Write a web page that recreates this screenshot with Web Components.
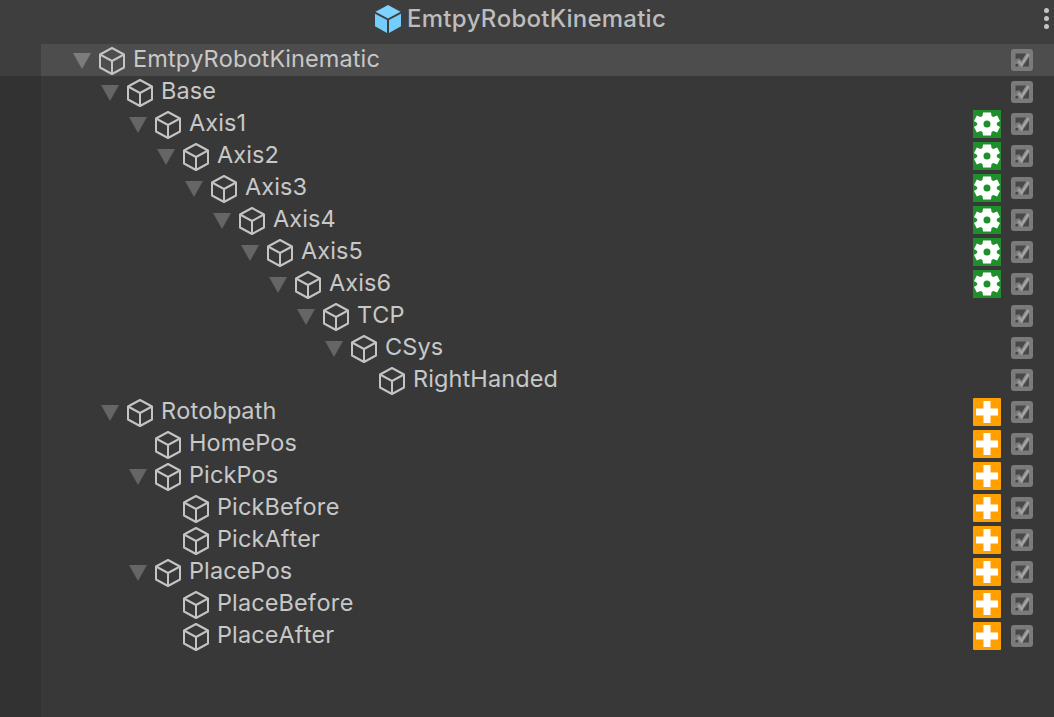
<!DOCTYPE html>
<html>
<head>
<meta charset="utf-8">
<title>EmtpyRobotKinematic</title>
<style>
    html, body { margin: 0; height: 100%; background: #383838; overflow: hidden; }
</style>
</head>
<body>
<hierarchy-panel title="EmtpyRobotKinematic">
    <hierarchy-row depth="0" arrow selected>EmtpyRobotKinematic</hierarchy-row>
    <hierarchy-row depth="1" arrow>Base</hierarchy-row>
    <hierarchy-row depth="2" arrow badge="gear">Axis1</hierarchy-row>
    <hierarchy-row depth="3" arrow badge="gear">Axis2</hierarchy-row>
    <hierarchy-row depth="4" arrow badge="gear">Axis3</hierarchy-row>
    <hierarchy-row depth="5" arrow badge="gear">Axis4</hierarchy-row>
    <hierarchy-row depth="6" arrow badge="gear">Axis5</hierarchy-row>
    <hierarchy-row depth="7" arrow badge="gear">Axis6</hierarchy-row>
    <hierarchy-row depth="8" arrow>TCP</hierarchy-row>
    <hierarchy-row depth="9" arrow>CSys</hierarchy-row>
    <hierarchy-row depth="10">RightHanded</hierarchy-row>
    <hierarchy-row depth="1" arrow badge="plus">Rotobpath</hierarchy-row>
    <hierarchy-row depth="2" badge="plus">HomePos</hierarchy-row>
    <hierarchy-row depth="2" arrow badge="plus">PickPos</hierarchy-row>
    <hierarchy-row depth="3" badge="plus">PickBefore</hierarchy-row>
    <hierarchy-row depth="3" badge="plus">PickAfter</hierarchy-row>
    <hierarchy-row depth="2" arrow badge="plus">PlacePos</hierarchy-row>
    <hierarchy-row depth="3" badge="plus">PlaceBefore</hierarchy-row>
    <hierarchy-row depth="3" badge="plus">PlaceAfter</hierarchy-row>
</hierarchy-panel>

<script>
// =================================================================================
// Icons
// =================================================================================

const CUBE_ICON = `
    <svg width="26" height="28" viewBox="0 0 26 28" fill="none" stroke="#c4c4c4" stroke-width="2" stroke-linejoin="round">
        <path d="M13 1 L25 7.5 V20.5 L13 27 L1 20.5 V7.5 Z"/>
        <path d="M1 7.5 L13 14 L25 7.5 M13 14 V27"/>
    </svg>`;

const GEAR_ICON = `
    <svg width="28" height="28" viewBox="0 0 28 28">
        <rect width="28" height="28" fill="#1f8f2c"/>
        <path fill="#fff" fill-rule="evenodd" style="filter: blur(0.5px)" d="M10 2.5 H18 L18.5 6 L20.4 7 L24.2 5.5 L27 11 L23.8 13 V15 L27 17 L24.2 22.5 L20.4 21 L18.5 22 L18 25.5 H10 L9.5 22 L7.6 21 L3.8 22.5 L1 17 L4.2 15 V13 L1 11 L3.8 5.5 L7.6 7 L9.5 6 Z M14 10.5 A3.5 3.5 0 1 0 14 17.5 A3.5 3.5 0 1 0 14 10.5 Z"/>
    </svg>`;

const PLUS_ICON = `
    <svg width="28" height="28" viewBox="0 0 28 28">
        <rect width="28" height="28" rx="1" fill="#ffa000"/>
        <path fill="#fff" style="filter: blur(0.4px)" d="M10.5 3 H17.5 V10.5 H25 V17.5 H17.5 V25 H10.5 V17.5 H3 V10.5 H10.5 Z"/>
    </svg>`;

const CHECK_ICON = `
    <svg width="22" height="22" viewBox="0 0 22 22">
        <rect width="22" height="22" rx="3" fill="#7b7b7b"/>
        <g fill="#484848" style="filter: blur(0.4px)">
            <path d="M4.5 4.5 H15 L10.5 11.5 L8 9 L4.5 10.5 Z"/>
            <path d="M18 8 V17.5 H11.5 Z"/>
            <path d="M4.5 15 H7 V17.5 H4.5 Z"/>
        </g>
        <path fill="none" stroke="#a2a2a2" stroke-width="2.5" d="M7.5 12 L10.5 16 L17.5 5"/>
    </svg>`;

const BADGES = { gear: GEAR_ICON, plus: PLUS_ICON };

// =================================================================================
// Hierarchy row
// =================================================================================

class HierarchyRow extends HTMLElement {
    constructor() {
        super();
        this.attachShadow({ mode: 'open' });
    }

    connectedCallback() {
        this.render();
    }

    render() {
        const depth = parseInt(this.getAttribute('depth') || '0');
        const badge = BADGES[this.getAttribute('badge')] || '';

        this.shadowRoot.innerHTML = `
            <style>
                :host {
                    display: flex;
                    align-items: center;
                    height: 32px;
                    padding-left: ${32 + depth * 28}px;
                    padding-right: 21px;
                    color: #c8c8c8;
                }
                :host([selected]) {
                    background: #4d4d4d;
                }
                .arrow {
                    width: 0;
                    height: 0;
                    border-left: 9px solid transparent;
                    border-right: 9px solid transparent;
                    border-top: 16px solid #656565;
                    visibility: ${this.hasAttribute('arrow') ? 'visible' : 'hidden'};
                    margin-top: 1px;
                }
                :host([selected]) .arrow {
                    border-top-color: #7c7c7c;
                }
                .cube {
                    display: flex;
                    margin-left: 8px;
                    margin-top: 2px;
                }
                .label {
                    flex: 1;
                    margin-left: 8px;
                    margin-top: -2px;
                    font: 400 23.5px/32px Inter, "Noto Sans", sans-serif;
                    font-kerning: none;
                    letter-spacing: 0.1px;
                    white-space: nowrap;
                }
                .badge {
                    display: flex;
                    width: 28px;
                    height: 28px;
                    margin-right: 10px;
                }
                .check {
                    display: flex;
                }
            </style>
            <span class="arrow"></span>
            <span class="cube">${CUBE_ICON}</span>
            <span class="label"><slot></slot></span>
            <span class="badge">${badge}</span>
            <span class="check">${CHECK_ICON}</span>
        `;
    }
}

customElements.define('hierarchy-row', HierarchyRow);

// =================================================================================
// Panel with title bar and gutter
// =================================================================================

class HierarchyPanel extends HTMLElement {
    constructor() {
        super();
        this.attachShadow({ mode: 'open' });
    }

    connectedCallback() {
        const title = this.getAttribute('title') || '';

        this.shadowRoot.innerHTML = `
            <style>
                :host {
                    display: flex;
                    flex-direction: column;
                    height: 717px;
                    background: #383838;
                }
                header {
                    display: flex;
                    align-items: center;
                    justify-content: center;
                    gap: 6px;
                    height: 44px;
                    flex: none;
                    padding-right: 13px;
                    padding-bottom: 6px;
                    box-sizing: border-box;
                    background: #3e3e3e;
                    position: relative;
                }
                h1 {
                    margin: 0;
                    font: 500 24px/32px Inter, "Noto Sans", sans-serif;
                    font-kerning: none;
                    letter-spacing: 0.25px;
                    color: #bdbdbd;
                }
                header svg {
                    flex: none;
                }
                .dots {
                    position: absolute;
                    right: 5px;
                    top: 8px;
                    display: flex;
                    flex-direction: column;
                    gap: 3px;
                }
                .dots i {
                    width: 5px;
                    height: 5px;
                    border-radius: 50%;
                    background: #c4c4c4;
                }
                .body {
                    display: flex;
                    flex: 1;
                }
                .gutter {
                    flex: none;
                    width: 41px;
                    background: #323232;
                }
                .gutter div {
                    height: 32px;
                    background: #3e3e3e;
                }
                .rows {
                    flex: 1;
                    min-width: 0;
                }
            </style>
            <header>
                <svg width="26" height="28" viewBox="0 0 26 28">
                    <path fill="#7dd2ff" d="M13 0 L25.5 6.8 L13 13.4 L0.5 6.8 Z"/>
                    <path fill="#74cdfb" d="M0 8.7 L12 15.1 V28 L0 21.3 Z"/>
                    <path fill="#74cdfb" d="M26 8.7 L14 15.1 V28 L26 21.3 Z"/>
                </svg>
                <h1>${title}</h1>
                <div class="dots"><i></i><i></i><i></i></div>
            </header>
            <div class="body">
                <div class="gutter"><div></div></div>
                <div class="rows"><slot></slot></div>
            </div>
        `;
    }
}

customElements.define('hierarchy-panel', HierarchyPanel);
</script>
</body>
</html>
